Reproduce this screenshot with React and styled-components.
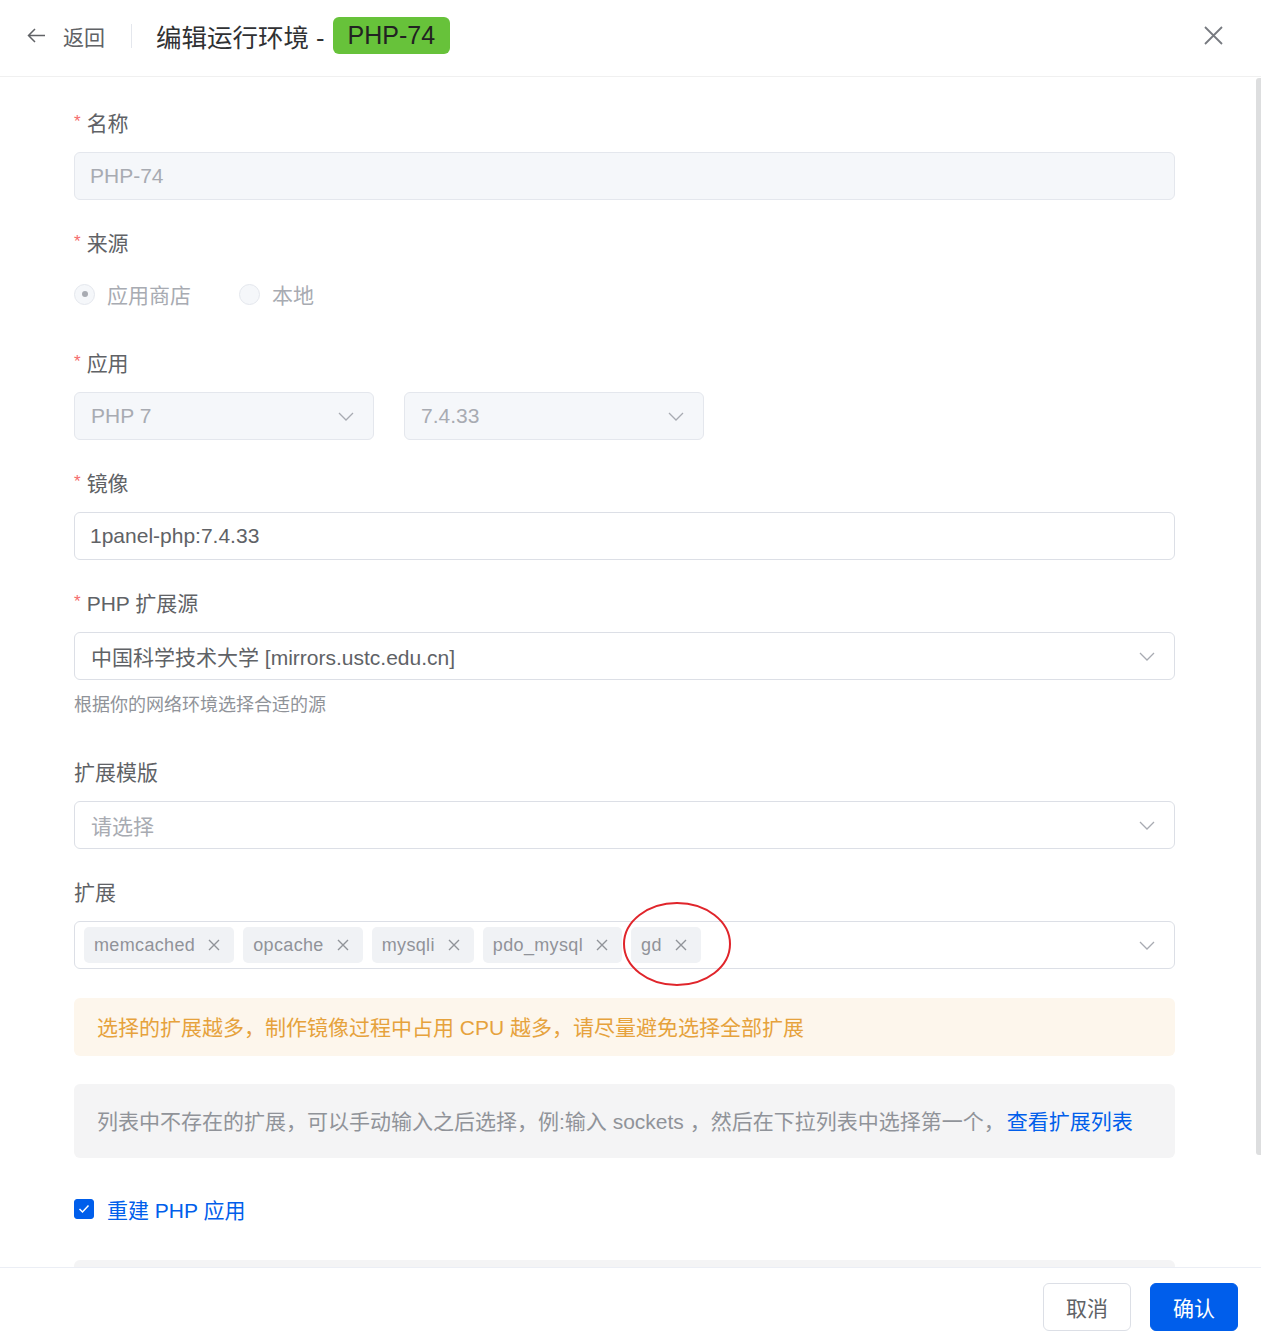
import React, { useState } from "react";
import styled, { createGlobalStyle } from "styled-components";

const GlobalStyle = createGlobalStyle`
  html, body {
    margin: 0;
    padding: 0;
    background: #fff;
  }
  body {
    font-family: "Liberation Sans", "Noto Sans CJK SC", sans-serif;
  }
  * {
    box-sizing: border-box;
  }
`;

const Page = styled.div`
  width: 1261px;
  height: 1344px;
  display: flex;
  flex-direction: column;
  background: #fff;
  overflow: hidden;
`;

const Header = styled.div`
  height: 77px;
  flex-shrink: 0;
  display: flex;
  align-items: center;
  padding: 0 38px 5px 27px;
  border-bottom: 1px solid #f0f0f0;
`;

const Back = styled.div`
  display: flex;
  align-items: center;
  gap: 17px;
  color: #606266;
  font-size: 21px;
  cursor: pointer;
`;

const Divider = styled.div`
  width: 1px;
  height: 24px;
  background: #e4e7ed;
  margin: 0 24px 0 26px;
`;

const Title = styled.div`
  display: flex;
  align-items: center;
  gap: 8px;
  font-size: 25.5px;
  color: #303133;
`;

const GreenTag = styled.span`
  display: inline-flex;
  align-items: center;
  height: 37px;
  padding: 0 15px;
  background: #67c23a;
  border-radius: 6px;
  color: #222;
  font-size: 25px;
`;

const CloseBtn = styled.div`
  margin-left: auto;
  display: flex;
  cursor: pointer;
`;

const Body = styled.div`
  flex: 1;
  position: relative;
  overflow: hidden;
  padding: 30px 86px 0 74px;
`;

const Thumb = styled.div`
  position: absolute;
  right: 0;
  top: 1px;
  width: 5px;
  height: 1077px;
  background: #dddedf;
  border-radius: 3px 0 0 3px;
`;

const FormItem = styled.div`
  margin-bottom: ${(p) => p.$mb || 27}px;
`;

const Label = styled.div`
  font-size: 21px;
  line-height: 33px;
  padding-bottom: 12px;
  color: #606266;
  display: flex;
  align-items: center;
`;

const Star = styled.span`
  color: #f56c6c;
  font-size: 17px;
  margin-right: 6px;
  line-height: 33px;
  position: relative;
  top: -2px;
`;

const Input = styled.div`
  height: 48px;
  display: flex;
  align-items: center;
  padding: 0 15px;
  border-radius: 6px;
  border: 1px solid ${(p) => (p.$disabled ? "#e4e7ed" : "#dcdfe6")};
  background: ${(p) => (p.$disabled ? "#f5f7fa" : "#fff")};
  color: ${(p) => (p.$disabled ? "#a8abb2" : "#606266")};
  font-size: 21px;
  width: ${(p) => (p.$width ? `${p.$width}px` : "100%")};
`;

const SelectBox = styled(Input)`
  padding: 0 19px 0 16px;
  justify-content: space-between;
`;

const SelectText = styled.span`
  color: ${(p) => (p.$placeholder ? "#a8abb2" : "inherit")};
`;

const Row = styled.div`
  display: flex;
  gap: 30px;
`;

const RadioGroup = styled.div`
  height: 48px;
  display: flex;
  align-items: center;
  gap: 48px;
`;

const RadioItem = styled.label`
  display: flex;
  align-items: center;
  gap: 12px;
  color: #a8abb2;
  font-size: 21px;
  position: relative;
  top: -2px;
`;

const RadioCircle = styled.span`
  width: 21px;
  height: 21px;
  border-radius: 50%;
  border: 1px solid #e4e7ed;
  background: #f5f7fa;
  display: flex;
  align-items: center;
  justify-content: center;
  &::after {
    content: "";
    width: 6px;
    height: 6px;
    border-radius: 50%;
    background: ${(p) => (p.$checked ? "#a8abb2" : "transparent")};
  }
`;

const Help = styled.div`
  margin-top: 12px;
  font-size: 18px;
  line-height: 27px;
  color: #909399;
`;

const TagSelect = styled.div`
  position: relative;
  height: 48px;
  display: flex;
  align-items: center;
  padding: 0 19px 0 9px;
  border: 1px solid #dcdfe6;
  border-radius: 6px;
`;

const Tags = styled.div`
  display: flex;
  gap: 9px;
  flex: 1;
`;

const Tag = styled.span`
  display: inline-flex;
  align-items: center;
  gap: 13px;
  height: 36px;
  padding: 0 14px 0 10px;
  background: #f0f2f5;
  border-radius: 5px;
  color: #909399;
  font-size: 18px;
  letter-spacing: 0.35px;
`;

const Ring = styled.svg`
  position: absolute;
  left: 546px;
  top: -22px;
  pointer-events: none;
`;

const Alert = styled.div`
  margin-top: 29px;
  height: 58px;
  display: flex;
  align-items: center;
  padding: 0 23px 3px;
  border-radius: 6px;
  background: ${(p) => (p.$type === "warning" ? "#fdf6ec" : "#f4f4f5")};
  color: ${(p) => (p.$type === "warning" ? "#e6a23c" : "#909399")};
  font-size: 21px;
`;

const InfoBox = styled(Alert)`
  margin-top: 28px;
  height: 74px;
`;

const Link = styled.a`
  color: #005eeb;
  text-decoration: none;
  margin-left: 2px;
`;

const CheckRow = styled.label`
  height: 48px;
  display: flex;
  align-items: center;
  gap: 13px;
  margin-top: 27px;
  color: #005eeb;
  font-size: 21px;
  cursor: pointer;
`;

const CheckBox = styled.span`
  width: 20px;
  height: 20px;
  border-radius: 3px;
  background: ${(p) => (p.$checked ? "#005eeb" : "#fff")};
  border: 1px solid ${(p) => (p.$checked ? "#005eeb" : "#dcdfe6")};
  display: flex;
  align-items: center;
  justify-content: center;
`;

const NextBox = styled.div`
  margin-top: 27px;
  height: 60px;
  border-radius: 6px;
  background: #f4f4f5;
`;

const Footer = styled.div`
  height: 77px;
  flex-shrink: 0;
  border-top: 1px solid #ebeef5;
  display: flex;
  justify-content: flex-end;
  align-items: flex-start;
  gap: 19px;
  padding: 15px 23px 0 0;
`;

const Button = styled.button`
  height: 48px;
  padding: 0 22px;
  border-radius: 6px;
  font-size: 21px;
  font-family: inherit;
  cursor: pointer;
  border: 1px solid ${(p) => (p.$primary ? "#005eeb" : "#dcdfe6")};
  background: ${(p) => (p.$primary ? "#005eeb" : "#fff")};
  color: ${(p) => (p.$primary ? "#fff" : "#606266")};
`;

const Chevron = () => (
  <svg width="16" height="9" viewBox="0 0 16 9">
    <polyline points="1,1 8,8 15,1" fill="none" stroke="#a8abb2" strokeWidth="1.3" />
  </svg>
);

const SmallX = () => (
  <svg width="12" height="12" viewBox="0 0 12 12">
    <path d="M1 1 L11 11 M11 1 L1 11" stroke="#909399" strokeWidth="1.4" />
  </svg>
);

const extensions = ["memcached", "opcache", "mysqli", "pdo_mysql", "gd"];

const App = () => {
  const [rebuild, setRebuild] = useState(true);

  return (
    <Page>
      <GlobalStyle />
      <Header>
        <Back>
          <svg width="19" height="15" viewBox="0 0 19 15">
            <path d="M18 7.5 H1.5 M8 1 L1.5 7.5 L8 14" fill="none" stroke="#606266" strokeWidth="1.5" />
          </svg>
          返回
        </Back>
        <Divider />
        <Title>
          编辑运行环境 -<GreenTag>PHP-74</GreenTag>
        </Title>
        <CloseBtn>
          <svg width="19" height="19" viewBox="0 0 19 19">
            <path d="M1 1 L18 18 M18 1 L1 18" stroke="#777a80" strokeWidth="1.8" />
          </svg>
        </CloseBtn>
      </Header>

      <Body>
        <Thumb />
        <FormItem>
          <Label>
            <Star>*</Star>名称
          </Label>
          <Input $disabled>PHP-74</Input>
        </FormItem>

        <FormItem>
          <Label>
            <Star>*</Star>来源
          </Label>
          <RadioGroup>
            <RadioItem>
              <RadioCircle $checked />
              应用商店
            </RadioItem>
            <RadioItem>
              <RadioCircle />
              本地
            </RadioItem>
          </RadioGroup>
        </FormItem>

        <FormItem>
          <Label>
            <Star>*</Star>应用
          </Label>
          <Row>
            <SelectBox $disabled $width={300}>
              <span>PHP 7</span>
              <Chevron />
            </SelectBox>
            <SelectBox $disabled $width={300}>
              <span>7.4.33</span>
              <Chevron />
            </SelectBox>
          </Row>
        </FormItem>

        <FormItem>
          <Label>
            <Star>*</Star>镜像
          </Label>
          <Input>1panel-php:7.4.33</Input>
        </FormItem>

        <FormItem $mb={37}>
          <Label>
            <Star>*</Star>PHP 扩展源
          </Label>
          <SelectBox>
            <span>中国科学技术大学 [mirrors.ustc.edu.cn]</span>
            <Chevron />
          </SelectBox>
          <Help>根据你的网络环境选择合适的源</Help>
        </FormItem>

        <FormItem>
          <Label>扩展模版</Label>
          <SelectBox>
            <SelectText $placeholder>请选择</SelectText>
            <Chevron />
          </SelectBox>
        </FormItem>

        <div>
          <Label>扩展</Label>
          <TagSelect>
            <Tags>
              {extensions.map((ext) => (
                <Tag key={ext}>
                  {ext}
                  <SmallX />
                </Tag>
              ))}
            </Tags>
            <Chevron />
            <Ring width="112" height="88" viewBox="0 0 112 88">
              <ellipse cx="56" cy="44" rx="53" ry="41" fill="none" stroke="#e0252b" strokeWidth="2" />
            </Ring>
          </TagSelect>
          <Alert $type="warning">
            选择的扩展越多，制作镜像过程中占用 CPU 越多，请尽量避免选择全部扩展
          </Alert>
          <InfoBox>
            列表中不存在的扩展，可以手动输入之后选择，例:输入 sockets ，然后在下拉列表中选择第一个，
            <Link href="#">查看扩展列表</Link>
          </InfoBox>
        </div>

        <CheckRow onClick={() => setRebuild(!rebuild)}>
          <CheckBox $checked={rebuild}>
            {rebuild && (
              <svg width="12" height="10" viewBox="0 0 12 10">
                <polyline points="1.5,5 4.5,8 10.5,1.5" fill="none" stroke="#fff" strokeWidth="1.5" />
              </svg>
            )}
          </CheckBox>
          重建 PHP 应用
        </CheckRow>

        <NextBox />
      </Body>

      <Footer>
        <Button>取消</Button>
        <Button $primary>确认</Button>
      </Footer>
    </Page>
  );
};

export default App;
